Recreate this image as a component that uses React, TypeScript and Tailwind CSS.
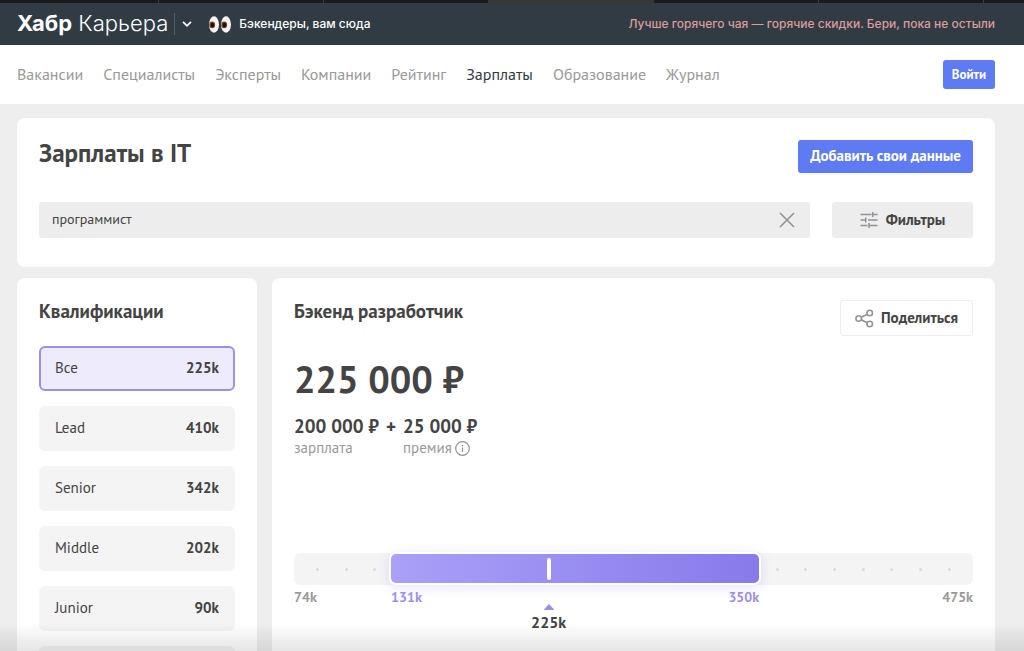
import { useState } from "react";

const navItems = ["Вакансии", "Специалисты", "Эксперты", "Компании", "Рейтинг", "Зарплаты", "Образование", "Журнал"];

const grades = [
  { name: "Все", value: "225k" },
  { name: "Lead", value: "410k" },
  { name: "Senior", value: "342k" },
  { name: "Middle", value: "202k" },
  { name: "Junior", value: "90k" },
];

// share of the scale, in percent
const range = { from: 14.3, to: 68.5, median: 37.5 };

const Eye = () => (
  <svg width="10" height="17" viewBox="0 0 10 17" aria-hidden="true">
    <ellipse cx="5" cy="8.5" rx="5" ry="8.2" fill="#f6f4f1" />
    <ellipse cx="3.2" cy="8.9" rx="2.9" ry="3.3" fill="#7a431f" />
    <ellipse cx="3.4" cy="9" rx="1.7" ry="2.2" fill="#1c0f09" />
  </svg>
);

const FiltersIcon = () => (
  <svg width="18" height="18" viewBox="0 0 18 18" fill="none" stroke="#909498" strokeWidth="1.5" aria-hidden="true">
    <path d="M.5 3.5h11M12.8 3.500h4.700M12.8 1v5M.5 9h5M5.700 6.500v5M8 9h9.500M.5 14.500h7M9 12v5M9 14.500h8.500" />
  </svg>
);

const ShareIcon = () => (
  <svg width="19" height="19" viewBox="0 0 20 20" fill="none" stroke="#909498" strokeWidth="1.7" aria-hidden="true">
    <circle cx="3.9" cy="10" r="2.900" />
    <circle cx="15.500" cy="4.200" r="2.900" />
    <circle cx="15.500" cy="15.800" r="2.900" />
    <path d="M6.600 8.700l6.300-3.200M6.600 11.300l6.300 3.200" />
  </svg>
);

const Header = () => (
  <header>
    <div className="flex h-[3px] overflow-hidden bg-[#1b1b1b]">
      <span className="w-[159px] shrink-0 border-r border-[#3a3a3a]" />
      {[1, 2, 3, 4, 5].map((i) => (
        <span key={i} className={`w-[165px] shrink-0 border-r border-[#3a3a3a] ${i === 3 ? "bg-[#363836]" : ""}`} />
      ))}
    </div>
    <div className="flex h-[42px] items-center bg-[#303b44] pl-[17px] pr-[29px] font-['Inter',sans-serif] text-white">
      <a href="#" className="pb-0.5 text-[22px] leading-7">
        <b className="font-bold">Хабр</b> <span className="font-light">Карьера</span>
      </a>
      <button type="button" aria-label="Другие сервисы" className="ml-1.5 flex h-[22px] w-6 items-center justify-center border-l border-[#56606a]">
        <svg width="10" height="6" viewBox="0 0 10 6" fill="none" stroke="#fff" strokeWidth="1.7" aria-hidden="true">
          <path d="M1 .8l4 4 4-4" />
        </svg>
      </button>
      <a href="#" className="ml-[11px] flex items-center gap-2 text-xs font-medium">
        <span className="flex gap-0.5"><Eye /><Eye /></span>
        Бэкендеры, вам сюда
      </a>
      <a href="#" className="ml-auto text-xs font-medium text-[#dd9c9a]">
        Лучше горячего чая — горячие скидки. Бери, пока не остыли
      </a>
    </div>
    <div className="flex h-[59px] items-center justify-between bg-white pl-[17px] pr-[29px]">
      <nav className="flex gap-5 pb-0.5 text-base text-[#999]">
        {navItems.map((item) => (
          <a key={item} href="#" className={item === "Зарплаты" ? "text-[#303b44]" : ""}>{item}</a>
        ))}
      </nav>
      <button type="button" className="h-[29px] rounded-[3px] bg-[#5e7bf3] px-[9px] text-[13px] font-bold text-white">Войти</button>
    </div>
  </header>
);

const SearchCard = () => {
  const [query, setQuery] = useState("программист");

  return (
    <section className="rounded-lg bg-white px-[22px] pb-[29px] pt-[22px]">
      <div className="flex items-start justify-between">
        <h1 className="text-[25px] leading-[26px] font-bold">Зарплаты в IT</h1>
        <button type="button" className="h-[33px] rounded-[3px] bg-[#5e7bf3] px-3 text-[15px] font-bold text-white">
          Добавить свои данные
        </button>
      </div>
      <div className="mt-[29px] flex gap-[22px]">
        <div className="flex h-9 flex-1 items-center rounded-[3px] bg-[#ededed] px-[13px]">
          <input
            type="text"
            aria-label="Специализация"
            className="min-w-0 flex-1 bg-transparent pb-0.5 text-sm outline-none"
            value={query}
            onChange={(e) => setQuery(e.target.value)}
          />
          <button type="button" aria-label="Очистить" onClick={() => setQuery("")}>
            <svg width="20" height="16" viewBox="0 0 20 16" fill="none" stroke="#909498" strokeWidth="1.6" aria-hidden="true">
              <path d="M3 1l14 14M17 1L3 15" />
            </svg>
          </button>
        </div>
        <button type="button" className="flex h-9 w-[141px] items-center justify-center gap-2 rounded-[3px] bg-[#ededed] text-[15px] font-bold">
          <FiltersIcon />
          Фильтры
        </button>
      </div>
    </section>
  );
};

const Grades = () => (
  <aside className="w-60 shrink-0 rounded-lg bg-white px-[22px] pt-[22px]">
    <h2 className="text-[19px] leading-[22px] font-bold">Квалификации</h2>
    <ul className="mt-6 flex flex-col gap-[15px]">
      {grades.map((grade, i) => (
        <li key={grade.name}>
          <button
            type="button"
            className={`flex h-[45px] w-full items-center justify-between rounded-md border-2 px-3.5 text-[15px] ${
              i === 0 ? "border-[#9d8fe4] bg-[#eeebfd]" : "border-[#f4f4f4] bg-[#f4f4f4]"
            }`}
          >
            {grade.name}
            <b>{grade.value}</b>
          </button>
        </li>
      ))}
      <li className="h-[45px] rounded-md bg-[#f4f4f4]" />
    </ul>
  </aside>
);

const SalaryScale = () => (
  <div className="mt-[95px]">
    <div className="relative flex h-8 items-center justify-between rounded-md bg-[#f4f4f4] px-[22px]">
      {Array.from({ length: 23 }, (_, i) => (
        <span key={i} className="size-[3px] rounded-full bg-[#dcdcdc]" />
      ))}
      <div
        className="absolute -top-px bottom-0 -mx-0.5 rounded-[7px] border-2 border-white bg-linear-to-r from-[#aaa0f8] to-[#887aea] bg-origin-border shadow-[0_2px_12px_rgba(130,110,240,0.2)]"
        style={{ left: `${range.from}%`, right: `${100 - range.to}%` }}
      />
      <div className="absolute h-[22px] w-1 -translate-x-1/2 rounded-xs bg-white" style={{ left: `${range.median}%` }} />
    </div>
    <div className="relative flex h-[54px] justify-between text-sm leading-6 font-bold text-[#999]">
      <span>74k</span>
      <span className="absolute text-[#9d8fe8]" style={{ left: `${range.from}%` }}>131k</span>
      <span className="absolute text-[#9d8fe8]" style={{ right: `${100 - range.to}%` }}>350k</span>
      <span>475k</span>
      <div className="absolute top-[19px] flex -translate-x-1/2 flex-col items-center text-base text-[#444]" style={{ left: `${range.median}%` }}>
        <svg width="11" height="6" viewBox="0 0 11 6" fill="#9d8fe8" aria-hidden="true">
          <path d="M5.500 0L11 6H0z" />
        </svg>
        225k
      </div>
    </div>
  </div>
);

const Salary = () => (
  <section className="min-w-0 flex-1 rounded-lg bg-white p-[22px]">
    <div className="flex items-start justify-between">
      <h2 className="text-[19px] leading-[22px] font-bold">Бэкенд разработчик</h2>
      <button type="button" className="flex h-9 items-center gap-[7px] rounded-[3px] border border-[#eee] px-3.5 text-[15px] font-bold">
        <ShareIcon />
        Поделиться
      </button>
    </div>
    <p className="mt-[21px] text-[38px] leading-[44px] font-bold">225 000 ₽</p>
    <div className="mt-[13px] flex gap-[7px] text-[19px] leading-6 font-bold">
      <div>
        200 000 ₽
        <p className="text-[15px] leading-5 font-normal text-[#999]">зарплата</p>
      </div>
      <span>+</span>
      <div>
        25 000 ₽
        <p className="flex items-center gap-[3px] text-[15px] leading-5 font-normal text-[#999]">
          премия
          <svg width="15" height="15" viewBox="0 0 15 15" fill="none" stroke="#909498" strokeWidth="1.2" aria-hidden="true">
            <circle cx="7.500" cy="7.500" r="6.800" />
            <path d="M7.500 6.500v4.500M7.500 4v1.300" />
          </svg>
        </p>
      </div>
    </div>
    <SalaryScale />
  </section>
);

export default function App() {
  return (
    <div className="flex h-screen flex-col overflow-hidden bg-[#eee] font-['PT_Sans','Noto_Sans',sans-serif] text-[#444]">
      <Header />
      <main className="flex min-h-0 flex-1 flex-col gap-[11px] pl-[17px] pr-[29px] pt-3.5">
        <SearchCard />
        <div className="flex gap-[15px]">
          <Grades />
          <Salary />
        </div>
      </main>
      <div className="pointer-events-none fixed inset-x-0 bottom-0 h-7 bg-linear-to-t from-black/10 to-transparent" />
    </div>
  );
}
